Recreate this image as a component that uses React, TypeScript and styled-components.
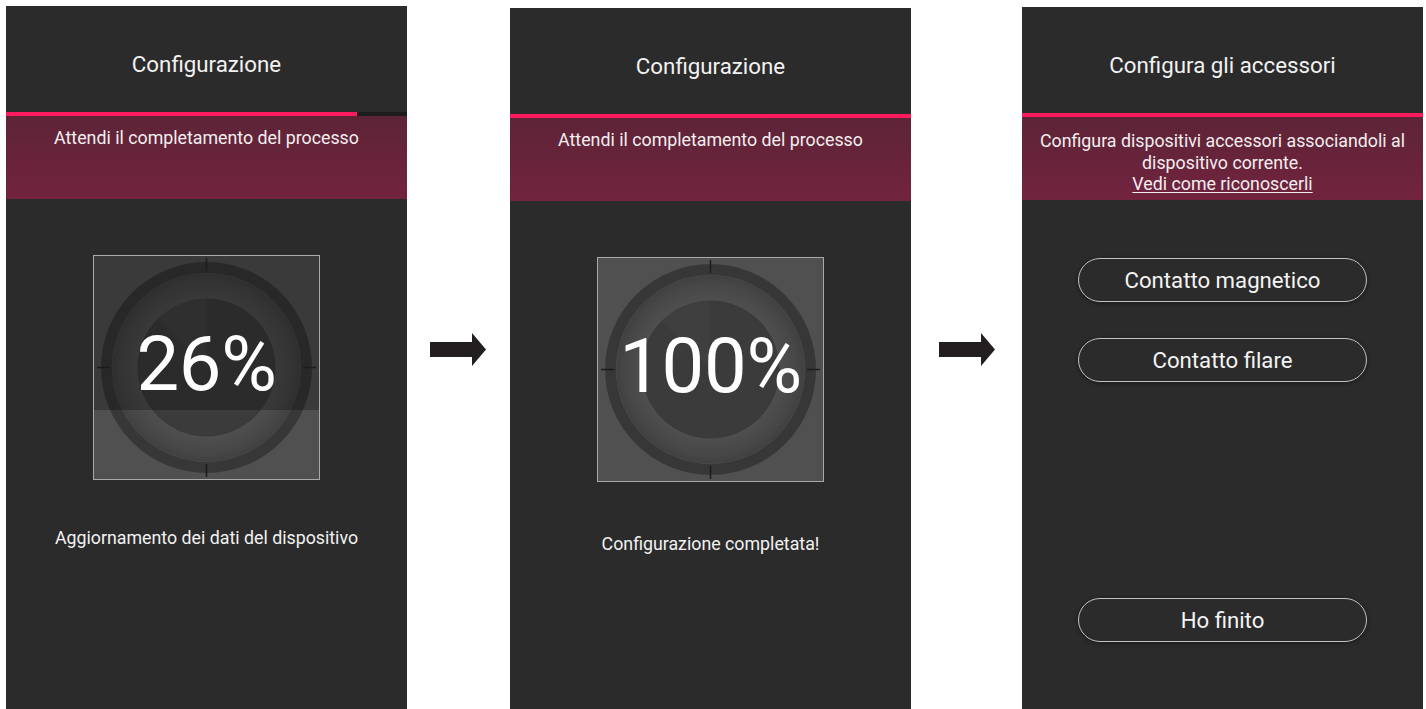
import React from 'react'
import styled, { createGlobalStyle } from 'styled-components'

const GlobalStyle = createGlobalStyle`
	html, body {
		margin: 0;
		padding: 0;
		background: #ffffff;
		overflow: hidden;
	}
	body {
		font-family: Roboto, "Noto Sans", "Liberation Sans", sans-serif;
	}
`

interface IScreenProps {
	title: string
	progress: number
	top: number
	children: React.ReactNode
	band: React.ReactNode
}

const Screen = ({ title, progress, top, children, band }: IScreenProps) => (
	<StyledScreen $top={top}>
		<StyledHeader>{title}</StyledHeader>
		<StyledTrack>
			<StyledTrackFill style={{ width: `${progress}%` }} />
		</StyledTrack>
		<StyledBand>{band}</StyledBand>
		{children}
	</StyledScreen>
)

interface IDialProps {
	percent: number
	fill: number
}

const Dial = ({ percent, fill }: IDialProps) => (
	<StyledDialBox>
		<StyledDialFill style={{ height: `${fill * 100}%` }} />
		<StyledDialSvg width="225" height="223" viewBox="0 0 225 223">
			<defs>
				<radialGradient id="midShade" cx="50%" cy="50%" r="50%">
					<stop offset="70%" stopColor="#000" stopOpacity="0" />
					<stop offset="92%" stopColor="#000" stopOpacity="0.12" />
					<stop offset="100%" stopColor="#000" stopOpacity="0.2" />
				</radialGradient>
			</defs>
			<circle cx="112.5" cy="111.5" r="94" fill="url(#midShade)" />
			<circle cx="112.5" cy="111.5" r="100" fill="none" stroke="#000" strokeOpacity="0.3" strokeWidth="11" />
			<circle cx="112.5" cy="111.5" r="69" fill="#000" fillOpacity="0.26" />
			<path d="M112.5 111.5 L112.5 42.5 A69 69 0 0 0 63.7 62.7 Z" fill="#fff" fillOpacity="0.025" />
			<g stroke="#1c1c1c" strokeWidth="1.5">
				<line x1="112.5" y1="2" x2="112.5" y2="15" />
				<line x1="112.5" y1="208" x2="112.5" y2="221" />
				<line x1="3" y1="111.5" x2="16" y2="111.5" />
				<line x1="209" y1="111.5" x2="222" y2="111.5" />
			</g>
		</StyledDialSvg>
		<StyledPercent>{percent}%</StyledPercent>
	</StyledDialBox>
)

const Arrow = ({ offset, width }: { offset: number; width: number }) => (
	<StyledArrowSlot $offset={offset} $width={width}>
		<svg width="56" height="34" viewBox="0 0 56 34">
			<path d="M0 9 H42 V0 L56 16.5 L42 33 V24 H0 Z" fill="#231f20" />
		</svg>
	</StyledArrowSlot>
)

export default function App() {
	return (
		<StyledPage>
			<GlobalStyle />
			<Screen
				title="Configurazione"
				progress={87.5}
				top={6}
				band={<StyledBandText>Attendi il completamento del processo</StyledBandText>}
			>
				<Dial percent={26} fill={0.31} />
				<StyledStatus $gap={47}>Aggiornamento dei dati del dispositivo</StyledStatus>
			</Screen>
			<Arrow offset={23} width={103} />
			<Screen
				title="Configurazione"
				progress={100}
				top={8}
				band={<StyledBandText>Attendi il completamento del processo</StyledBandText>}
			>
				<Dial percent={100} fill={1} />
				<StyledStatus $gap={51}>Configurazione completata!</StyledStatus>
			</Screen>
			<Arrow offset={28} width={111} />
			<Screen
				title="Configura gli accessori"
				progress={100}
				top={7}
				band={
					<StyledBandText $lines>
						Configura dispositivi accessori associandoli al
						<br />
						dispositivo corrente.
						<br />
						<StyledLink>Vedi come riconoscerli</StyledLink>
					</StyledBandText>
				}
			>
				<StyledButtonList>
					<StyledPillButton>Contatto magnetico</StyledPillButton>
					<StyledPillButton>Contatto filare</StyledPillButton>
					<StyledPillButton $bottom>Ho finito</StyledPillButton>
				</StyledButtonList>
			</Screen>
		</StyledPage>
	)
}

const StyledPage = styled.div`
	display: flex;
	align-items: flex-start;
	height: 709px;
	width: 1426px;
	padding-left: 6px;
	box-sizing: border-box;
`

const StyledScreen = styled.div<{ $top: number }>`
	width: 401px;
	flex-shrink: 0;
	margin-top: ${(p) => p.$top}px;
	height: ${(p) => 709 - p.$top}px;
	background: #2b2b2b;
	display: flex;
	flex-direction: column;
	align-items: center;
	color: #f1f1f1;
`

const StyledHeader = styled.div`
	box-sizing: border-box;
	width: 100%;
	height: 106px;
	padding-top: 45px;
	text-align: center;
	font-size: 22.3px;
	line-height: 26px;
	color: #f2f2f2;
`

const StyledTrack = styled.div`
	width: 100%;
	height: 4px;
	background: #1c1c1c;
`

const StyledTrackFill = styled.div`
	height: 100%;
	background: #fe1a5e;
`

const StyledBand = styled.div`
	box-sizing: border-box;
	width: 100%;
	height: 83px;
	padding-top: 11px;
	background: linear-gradient(180deg, #5d2437 0%, #72233e 100%);
	text-align: center;
`

const StyledBandText = styled.div<{ $lines?: boolean }>`
	font-size: 17.8px;
	line-height: ${(p) => (p.$lines ? '21.5px' : '22px')};
	margin-top: ${(p) => (p.$lines ? '2px' : '0')};
	color: #f3eef0;
`

const StyledLink = styled.span`
	text-decoration: underline;
	text-underline-offset: 2px;
`

const StyledDialBox = styled.div`
	position: relative;
	margin-top: 56px;
	width: 225px;
	height: 223px;
	border: 1px solid #a9a9a9;
	background: #3a3a3a;
	overflow: hidden;
`

const StyledDialFill = styled.div`
	position: absolute;
	left: 0;
	right: 0;
	bottom: 0;
	background: #505050;
`

const StyledDialSvg = styled.svg`
	position: absolute;
	left: 0;
	top: 0;
`

const StyledPercent = styled.div`
	position: absolute;
	inset: 0;
	display: flex;
	align-items: center;
	justify-content: center;
	padding-bottom: 7px;
	font-size: 76px;
	font-weight: 400;
	color: #ffffff;
	letter-spacing: -0.3px;
`

const StyledStatus = styled.div<{ $gap: number }>`
	margin-top: ${(p) => p.$gap}px;
	font-size: 17.8px;
	line-height: 21px;
	color: #f2f2f2;
`

const StyledButtonList = styled.div`
	flex: 1;
	display: flex;
	flex-direction: column;
	align-items: center;
	gap: 36px;
	padding-top: 58px;
	padding-bottom: 67px;
`

const StyledPillButton = styled.button<{ $bottom?: boolean }>`
	width: 289px;
	height: 44px;
	flex-shrink: 0;
	margin-top: ${(p) => (p.$bottom ? 'auto' : '0')};
	border: 1px solid #c4c4c4;
	border-radius: 22px;
	background: #2b2b2b;
	box-shadow: 0 1px 4px rgba(0, 0, 0, 0.45);
	color: #f4f4f4;
	font-family: Roboto, "Noto Sans", "Liberation Sans", sans-serif;
	font-size: 22.2px;
	padding: 0;
	cursor: pointer;
`

const StyledArrowSlot = styled.div<{ $offset: number; $width: number }>`
	flex: 0 0 auto;
	width: ${(p) => p.$width}px;
	box-sizing: border-box;
	padding-top: 333px;
	padding-left: ${(p) => p.$offset}px;
	line-height: 0;
`
